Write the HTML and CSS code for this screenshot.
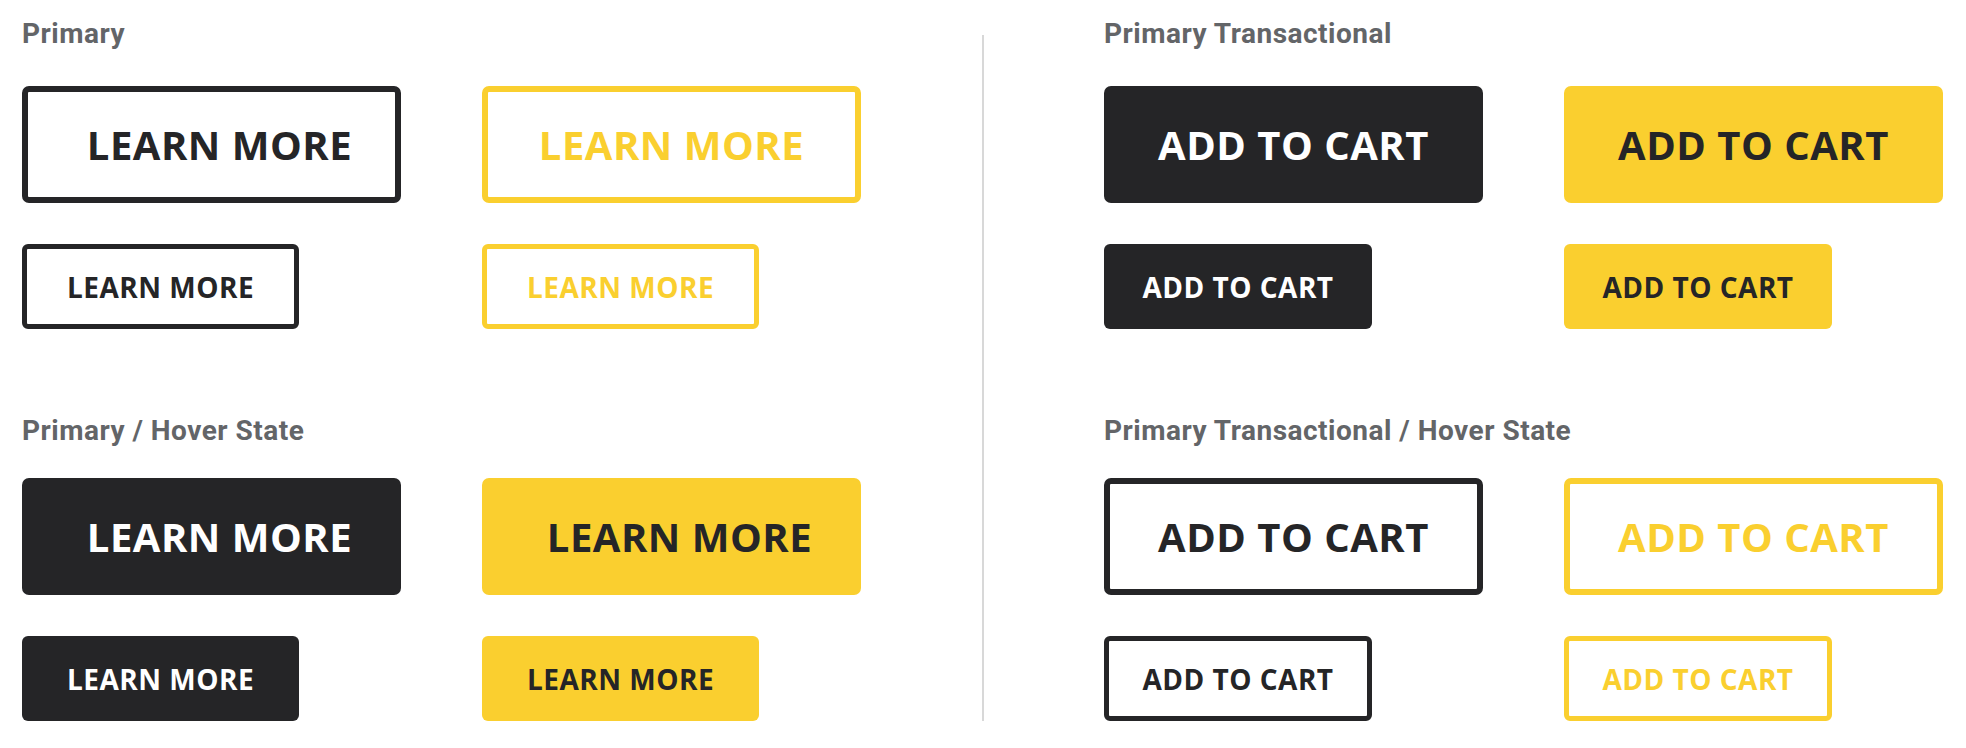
FILE: index.html
```html
<html>
<head>
    <title>Buttons</title>
    <link rel="stylesheet" href="styles.css">
</head>
<body>
    <div class="board">
        <div class="column column-left">
            <section class="group">
                <h2 class="group-title">Primary</h2>
                <div class="button-grid">
                    <a class="btn btn-lg btn-learn btn-outline-dark">LEARN MORE</a>
                    <a class="btn btn-lg btn-outline-yellow">LEARN MORE</a>
                    <a class="btn btn-sm btn-outline-dark">LEARN MORE</a>
                    <a class="btn btn-sm btn-outline-yellow">LEARN MORE</a>
                </div>
            </section>
            <section class="group group-hover">
                <h2 class="group-title">Primary / Hover State</h2>
                <div class="button-grid">
                    <a class="btn btn-lg btn-learn btn-dark">LEARN MORE</a>
                    <a class="btn btn-lg btn-learn btn-yellow">LEARN MORE</a>
                    <a class="btn btn-sm btn-dark">LEARN MORE</a>
                    <a class="btn btn-sm btn-yellow">LEARN MORE</a>
                </div>
            </section>
        </div>
        <div class="divider"></div>
        <div class="column column-right">
            <section class="group">
                <h2 class="group-title">Primary Transactional</h2>
                <div class="button-grid">
                    <a class="btn btn-lg btn-dark">ADD TO CART</a>
                    <a class="btn btn-lg btn-yellow">ADD TO CART</a>
                    <a class="btn btn-sm btn-cart btn-dark">ADD TO CART</a>
                    <a class="btn btn-sm btn-cart btn-yellow">ADD TO CART</a>
                </div>
            </section>
            <section class="group group-hover">
                <h2 class="group-title">Primary Transactional / Hover State</h2>
                <div class="button-grid">
                    <a class="btn btn-lg btn-outline-dark">ADD TO CART</a>
                    <a class="btn btn-lg btn-outline-yellow">ADD TO CART</a>
                    <a class="btn btn-sm btn-cart btn-outline-dark">ADD TO CART</a>
                    <a class="btn btn-sm btn-cart btn-outline-yellow">ADD TO CART</a>
                </div>
            </section>
        </div>
    </div>
</body>
</html>
```

FILE: styles.css
```css
body {
    margin: 0;
    background-color: #ffffff;
    font-family: Roboto, "Liberation Sans", sans-serif;
}
.board {
    display: flex;
    padding: 17px 0 0 22px;
}
.column-left {
    width: 960px;
}
.column-right {
    padding-left: 120px;
}
.divider {
    width: 2px;
    margin-top: 18px;
    background-color: #d8d8d8;
}
.group-hover {
    margin-top: 85px;
}
.group-title {
    margin: 0 0 35px 0;
    font-size: 28px;
    line-height: 34px;
    font-weight: 700;
    letter-spacing: 0.5px;
    color: #636568;
}
.group-hover .group-title {
    margin-bottom: 30px;
}
.button-grid {
    display: grid;
    grid-template-columns: 379px 379px;
    column-gap: 81px;
    row-gap: 41px;
    justify-items: start;
}
.btn {
    display: flex;
    align-items: center;
    justify-content: center;
    box-sizing: border-box;
    font-family: "Open Sans", sans-serif;
    font-weight: 700;
    border-radius: 7px;
    text-decoration: none;
    white-space: nowrap;
    cursor: pointer;
}
.btn-lg {
    width: 379px;
    height: 117px;
    font-size: 40px;
    letter-spacing: 0.5px;
}
.btn-learn {
    padding-left: 16px;
}
.btn-sm {
    width: 277px;
    height: 85px;
    font-size: 28px;
    letter-spacing: 0.5px;
    border-radius: 6px;
}
.btn-cart {
    width: 268px;
}
.btn-dark {
    background-color: #252527;
    color: #ffffff;
}
.btn-yellow {
    background-color: #facf2f;
    color: #252527;
}
.btn-outline-dark {
    border: 6px solid #252527;
    color: #252527;
}
.btn-outline-yellow {
    border: 6px solid #facf2f;
    color: #facf2f;
}
.btn-sm.btn-outline-dark,
.btn-sm.btn-outline-yellow {
    border-width: 5px;
}
```
